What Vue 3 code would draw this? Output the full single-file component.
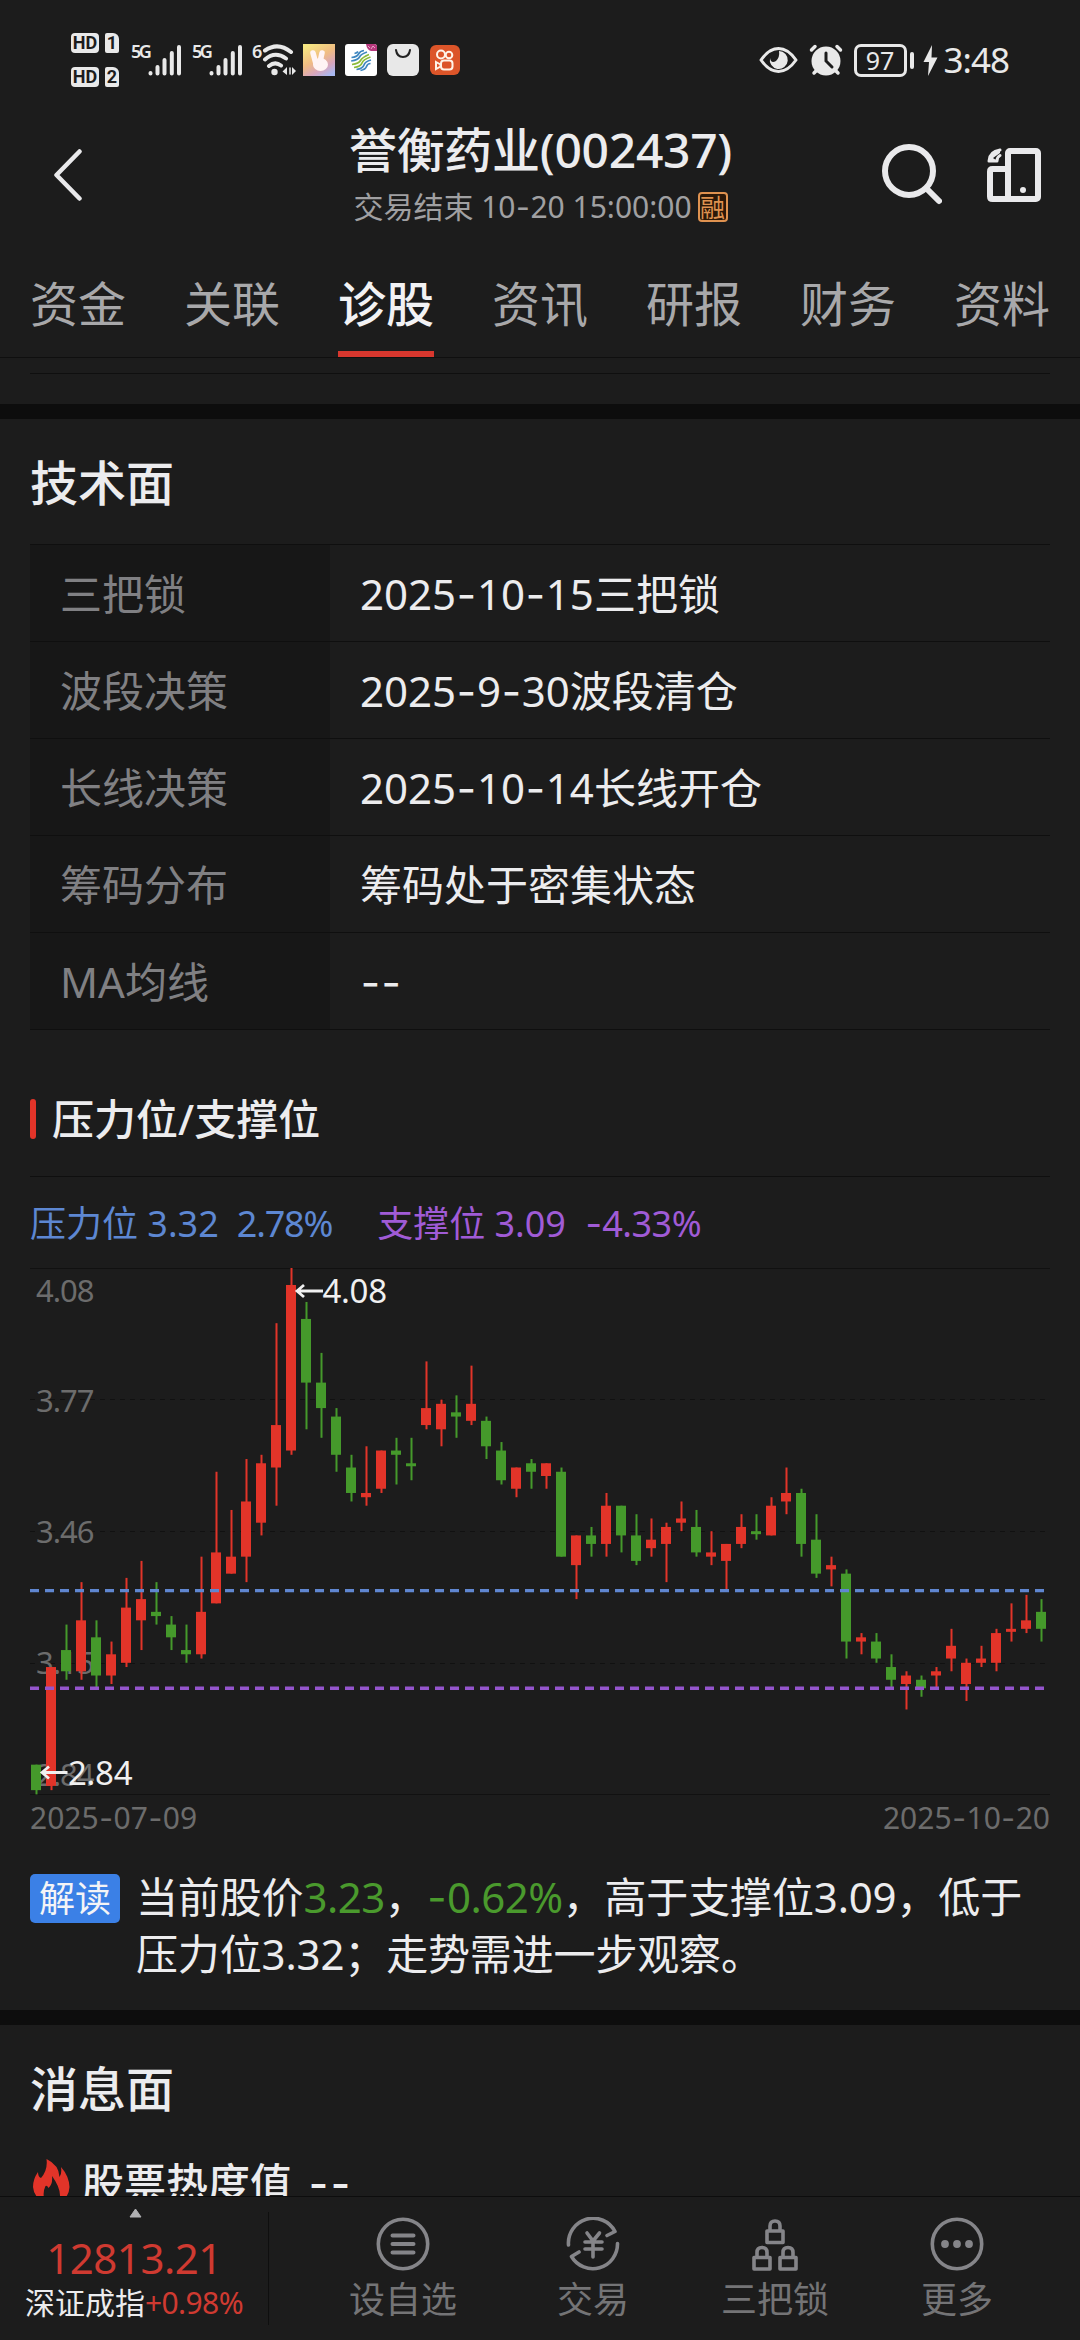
<template>
  <div class="screen">

    <!-- System status bar -->
    <div class="status">
      <div class="sims">
        <div v-for="n in 2" :key="n" class="sim">
          <span class="hd">HD</span>
          <span class="sim-no">{{ n }}</span>
        </div>
      </div>

      <div v-for="n in 2" :key="n" class="signal">
        <span class="net">5G</span>
        <svg width="34" height="34" viewBox="0 0 34 34" stroke="#e9e9e9" stroke-width="4" stroke-linecap="round">
          <path d="M2.5 30V30.5M9.5 24V30.5M16.5 17V30.5M23.8 10V30.5M31 4V30.5" />
        </svg>
      </div>

      <div class="wifi">
        <span class="net">6</span>
        <svg width="36" height="34" viewBox="0 0 36 34" fill="none" stroke="#e9e9e9" stroke-width="4" stroke-linecap="round">
          <path d="M4 7.5Q17 -1.5 30 9M4 16.5Q14 7.500 25 15.500M8 23Q14 18 20 22.500" />
          <circle cx="13.500" cy="29" r="3.200" fill="#e9e9e9" stroke="none" />
          <path d="M26 24V32L21.500 28.500ZM31 32V24L35 28Z" fill="#e9e9e9" stroke="none" />
          <path d="M29 25V31" stroke-width="1.500" />
        </svg>
      </div>

      <svg class="app" width="32" height="32" viewBox="0 0 32 32">
        <defs>
          <linearGradient id="hand-bg" x1="0.2" y1="0" x2="0.8" y2="1">
            <stop offset="0" stop-color="#f6e781" />
            <stop offset="0.45" stop-color="#f0bc83" />
            <stop offset="0.75" stop-color="#d8a6bd" />
            <stop offset="1" stop-color="#a9b9f2" />
          </linearGradient>
        </defs>
        <rect width="32" height="32" fill="url(#hand-bg)" />
        <path d="M10 9L13 20M19 9L17 18" stroke="#fff4f4" stroke-width="5.500" stroke-linecap="round" />
        <ellipse cx="17.500" cy="20.500" rx="7.500" ry="6.500" fill="#fff4f4" />
      </svg>

      <svg class="app" width="32" height="32" viewBox="0 0 32 32" fill="none">
        <rect width="32" height="32" rx="3" fill="#fff" />
        <path d="M21 0H29Q32 0 32 3V7H26Q22 6 21 0Z" fill="#b7377c" />
        <path d="M23 2L25 4M26 5L28 2L30 4" stroke="#e9a5c8" stroke-width="1" />
        <g stroke-width="1.700">
          <path d="M9.500 9.500Q12 9 13 7.500M6.500 13.500Q12 13 13.500 10T19 6.500M6.200 17Q13 16 14.500 13T22 8" stroke="#3e86bf" />
          <path d="M7 20.500Q14 19.500 15.500 16.500T24 10.500M9 23.500Q16 22.500 17 19T25.500 13" stroke="#8cbb3a" />
          <path d="M11.500 25.500Q18 24.500 19 21T26 16M15.500 26.500Q20.500 25.500 21.500 22.500T25.500 19.500" stroke="#3e86bf" />
        </g>
      </svg>

      <svg class="app" width="32" height="32" viewBox="0 0 32 32" fill="none">
        <rect width="32" height="32" rx="6" fill="#e8e8e8" />
        <path d="M9 6Q10 13 16 13T23 6" stroke="#222" stroke-width="2" stroke-linecap="round" />
      </svg>

      <svg class="app" width="32" height="32" viewBox="0 0 32 32" fill="none" stroke="#fff4e8" stroke-width="2">
        <rect x="1" y="1" width="30" height="30" rx="6" fill="#dc5529" stroke="none" />
        <circle cx="12" cy="10.500" r="4" />
        <circle cx="20" cy="11" r="3.300" />
        <rect x="12" y="16.500" width="11.500" height="9" rx="3" />
        <path d="M7 18L11.500 20.500V22.500L7 25Z" />
      </svg>

      <div class="status-right">
        <svg width="39" height="28" viewBox="0 0 39 28" fill="none">
          <path d="M2 14Q10 2.500 19.500 2.500T37 14Q29 25.500 19.500 25.500T2 14Z" stroke="#e9e9e9" stroke-width="3" stroke-linejoin="round" />
          <path d="M20 5A9 9 0 1 1 11 12Q12 18 17 15Q21 11 20 5Z" fill="#e9e9e9" />
        </svg>
        <svg class="alarm" width="34" height="32" viewBox="0 0 34 32" fill="none" stroke="#e9e9e9" stroke-linecap="round">
          <circle cx="17" cy="17" r="14.500" fill="#e9e9e9" stroke="none" />
          <path d="M2.500 6L6 2.500M31.500 6L28 2.500M5 29L8 26M29 29L26 26" stroke-width="3.500" />
          <path d="M17 9V17L23 23" stroke="#1c1c1c" stroke-width="3" />
        </svg>
        <span class="battery">97</span>
        <span class="nub" />
        <svg class="bolt" width="15" height="31" viewBox="0 0 15 31">
          <path d="M9 0L0.500 17H6L5 31L14.500 12.500H8.500Z" fill="#e9e9e9" />
        </svg>
        <span class="clock">3:48</span>
      </div>
    </div>

    <!-- Title bar -->
    <header class="header">
      <svg class="back" width="28" height="52" viewBox="0 0 28 52" fill="none">
        <path d="M25.500 2.500L2.500 26L25.500 49.500" stroke="#e9e9eb" stroke-width="4.500" stroke-linecap="round" stroke-linejoin="round" />
      </svg>
      <div class="heading">
        <h1>誉衡药业(002437)</h1>
        <div class="sub">
          <DashText text="交易结束 10-20 15:00:00" />
          <span class="margin-tag">融</span>
        </div>
      </div>
      <svg class="search" width="60" height="61" viewBox="0 0 60 61" fill="none" stroke="#e9e9eb">
        <circle cx="27" cy="27" r="24" stroke-width="6" />
        <path d="M45 45L57 57" stroke-width="6" stroke-linecap="round" />
      </svg>
      <svg width="54" height="54" viewBox="0 0 54 54" fill="none" stroke="#e9e9eb" stroke-width="6">
        <rect x="21" y="3" width="30" height="48" rx="2" />
        <path d="M21 21H5.500Q3 21 3 23.500V48.500Q3 51 5.500 51H24" />
        <path d="M13 2Q2.500 3.500 2 13H10Q10 9 13 7.500" stroke-width="3" stroke-linejoin="round" stroke-linecap="round" />
        <path d="M13 2Q2.500 3.500 2 13H10L6 10L13 5Z" fill="#e9e9eb" stroke="none" />
        <circle cx="36" cy="42" r="3" fill="#e9e9eb" stroke="none" />
      </svg>
    </header>

    <nav class="tabs">
      <span v-for="t in tabs" :key="t" class="tab" :class="{ active: t === '诊股' }">{{ t }}</span>
    </nav>

    <!-- Scrolling content -->
    <main class="content">
      <div class="prev-end" />

      <section class="technical">
        <h2>技术面</h2>
        <div class="table">
          <div v-for="r in rows" :key="r.label" class="row">
            <span class="label">{{ r.label }}</span>
            <DashText class="value" :text="r.value" />
          </div>
        </div>

        <h3 class="levels-title">压力位/支撑位</h3>

        <div class="legend">
          <span class="resist">压力位 3.32</span>
          <span class="resist pct">2.78%</span>
          <span class="support">支撑位 3.09</span>
          <DashText class="support pct" text="-4.33%" />
        </div>

        <svg class="chart" width="1020" height="527" viewBox="0 0 1020 527">
          <path class="edge" d="M0 0.500H1020M0 526.500H1020" />
          <path class="grid" d="M0 131.500H1020M0 263.500H1020M0 395.500H1020" />
          <text v-for="(p, i) in axis" :key="p" class="axis" x="6" :y="axisY[i]">{{ p }}</text>

          <g v-for="(c, i) in candles" :key="i" :class="c[0] ? 'up' : 'down'">
            <rect :x="i * 15 + 5.500" :y="y(c[1])" width="2" :height="y(c[4]) - y(c[1])" />
            <rect :x="i * 15 + 1" :y="y(c[2])" width="10" :height="Math.max(3, y(c[3]) - y(c[2]))" />
          </g>

          <path class="level resist-line" :d="`M0 ${y(332)}H1015`" />
          <path class="level support-line" :d="`M0 ${y(309)}H1015`" />

          <path class="arrow" d="M293 23H267M274 17L267 23L274 29M37.500 504.500H12M19 498.500L12 504.500L19 510.500" />
          <text class="mark" x="292.500" y="35">4.08</text>
          <text class="mark" x="38" y="516.500">2.84</text>
        </svg>

        <div class="dates">
          <DashText text="2025-07-09" />
          <DashText text="2025-10-20" />
        </div>

        <div class="note">
          <span class="note-tag">解读</span>
          <p>
            当前股价<span class="fall">3.23</span>，<DashText class="fall" text="-0.62%" />，高于支撑位3.09，低于压力位3.32；走势需进一步观察。
          </p>
        </div>
      </section>

      <section class="news">
        <h2>消息面</h2>
        <div class="heat">
          <svg width="37" height="44" viewBox="0 0 37 44">
            <path d="M13.500 0Q26 6 26.500 18Q29 15 28 8Q36 17 36.500 28Q36 39 26 43Q30 32 19 17Q20 25 15.500 29Q14 26 12.500 27Q9 34 12 43Q1 39 0 28Q0 20 5 13Q5 18 8 19Q15 11 13.500 0Z" fill="#e23429" />
          </svg>
          <h3>股票热度值<DashText class="heat-value" text="--" /></h3>
        </div>
      </section>
    </main>

    <!-- Bottom bar -->
    <footer class="bottom">
      <div class="index">
        <svg width="13" height="10" viewBox="0 0 13 10">
          <path d="M6.500 1L12 9H1Z" fill="#b1b1b3" stroke="#b1b1b3" stroke-linejoin="round" />
        </svg>
        <span class="points">12813.21</span>
        <span class="index-name">深证成指<em>+0.98%</em></span>
      </div>

      <div class="actions">
        <div class="action">
          <svg width="54" height="54" viewBox="0 0 54 54">
            <circle cx="27" cy="27" r="24.700" />
            <path d="M16.500 18.500H37.500M16.500 27H37.500M16.500 35.500H37.500" stroke-width="4" />
          </svg>
          设自选
        </div>
        <div class="action">
          <svg width="54" height="54" viewBox="0 0 54 54">
            <path d="M2.500 28A24.700 24.700 0 0 1 49 14.500L41 18.500M51.500 26.500A24.700 24.700 0 0 1 5.500 39.500L13 35" />
            <path d="M21 16L27 24L33.500 16M19 25H36M19 32H36M27 24V40" />
          </svg>
          交易
        </div>
        <div class="action">
          <svg width="54" height="54" viewBox="0 0 54 54">
            <path d="M19 14H35V25.500H19ZM6 40.500H22V52H6ZM32 40.500H48V52H32Z" />
            <path d="M22 13V9Q22 4 27 4T32 9V13M9 39V35.500Q9 30.500 14 30.500T19 35.500V39M35 39V35.500Q35 30.500 40 30.500T45 35.500V39" />
          </svg>
          三把锁
        </div>
        <div class="action">
          <svg width="54" height="54" viewBox="0 0 54 54">
            <circle cx="27" cy="27" r="24.700" />
            <g class="dots">
              <circle cx="15" cy="27" r="3.900" />
              <circle cx="27" cy="27" r="3.900" />
              <circle cx="39" cy="27" r="3.900" />
            </g>
          </svg>
          更多
        </div>
      </div>
    </footer>

  </div>
</template>

<script setup>
import { h } from 'vue'

// hyphens are set in a wider face than the digits around them
const DashText = ({ text }) =>
  h('span', text.split(/(-)/).map(p => (p === '-' ? h('span', { class: 'dash' }, p) : p)))
DashText.props = ['text']

const tabs = ['资金', '关联', '诊股', '资讯', '研报', '财务', '资料']

const rows = [
  { label: '三把锁',   value: '2025-10-15三把锁' },
  { label: '波段决策', value: '2025-9-30波段清仓' },
  { label: '长线决策', value: '2025-10-14长线开仓' },
  { label: '筹码分布', value: '筹码处于密集状态' },
  { label: 'MA均线',   value: '--' },
]

const axis = ['4.08', '3.77', '3.46', '3.15', '2.84']
const axisY = [34, 143.5, 275, 406, 518]

// [rising, high, body top, body bottom, low], prices in cents
const candles = [
  [0, 291, 291, 285, 284], [1, 314, 314, 286, 285], [0, 324, 318, 313, 311], [1, 334, 325, 313, 311],
  [0, 325, 321, 312, 309], [1, 320, 317, 312, 310], [1, 335, 328, 315, 314], [1, 339, 330, 325, 318],
  [0, 334, 327, 326, 324], [0, 326, 324, 321, 318], [0, 324, 318, 317, 315], [1, 340, 327, 317, 316],
  [1, 360, 341, 329, 329], [1, 351, 340, 336, 336], [1, 363, 353, 340, 334], [1, 364, 362, 348, 345],
  [1, 395, 371, 361, 352], [1, 408, 404, 365, 364], [0, 400, 396, 381, 370], [0, 388, 381, 375, 368],
  [0, 375, 373, 364, 360], [0, 364, 361, 355, 353], [1, 366, 355, 354, 352], [1, 365, 365, 356, 355],
  [0, 368, 365, 364, 357], [0, 368, 362, 362, 358], [1, 386, 375, 371, 370], [1, 377, 376, 370, 366],
  [0, 378, 374, 373, 368], [1, 385, 376, 372, 371], [0, 373, 372, 366, 363], [0, 367, 365, 358, 357],
  [1, 361, 361, 356, 354], [0, 363, 362, 360, 356], [1, 362, 362, 359, 356], [0, 361, 360, 340, 340],
  [1, 345, 345, 338, 330], [0, 347, 345, 343, 340], [1, 355, 352, 343, 340], [0, 352, 352, 345, 341],
  [0, 350, 345, 339, 338], [1, 349, 344, 342, 340], [1, 348, 347, 343, 334], [1, 353, 349, 348, 346],
  [0, 351, 347, 341, 340], [1, 346, 341, 340, 338], [1, 343, 343, 339, 332], [1, 350, 347, 343, 342],
  [0, 350, 346, 346, 344], [1, 354, 352, 345, 345], [1, 361, 355, 353, 350], [0, 356, 355, 343, 340],
  [0, 350, 344, 336, 335], [1, 340, 338, 337, 333], [0, 337, 336, 320, 316], [1, 322, 321, 320, 317],
  [0, 322, 320, 316, 315], [0, 317, 314, 311, 309], [1, 313, 312, 310, 304], [0, 312, 311, 309, 307],
  [1, 314, 313, 312, 309], [1, 323, 319, 316, 313], [1, 316, 315, 310, 306], [1, 319, 316, 315, 314],
  [1, 323, 322, 315, 313], [1, 329, 323, 323, 320], [1, 331, 325, 323, 322], [0, 330, 327, 323, 320],
]

const y = cents => (408 - cents) * 4.245
</script>

<style>
  body {
    background: #1c1c1c;
  }

  .dash {
    padding: 0 0.018em;
    font-family: Inter, sans-serif;
  }
</style>

<style scoped>
  .screen {
    width: 1080px;
    height: 2340px;
    overflow: hidden;
    display: flex;
    flex-direction: column;
    background: #1c1c1c;
    color: #ececee;
    font-family: 'Noto Sans', 'Noto Sans CJK SC', sans-serif;
  }

  svg {
    display: block;
    flex: none;
  }

  h1, h2, h3, p {
    margin: 0;
    font-weight: 500;
  }

  /* Status bar */
  .status {
    height: 120px;
    box-sizing: border-box;
    padding: 0 71px;
    display: flex;
    align-items: center;
    color: #e9e9e9;
  }

  .sims {
    display: flex;
    flex-direction: column;
    gap: 14px;
    margin-right: 12px;
  }

  .sim {
    display: flex;
    gap: 6px;
  }

  .hd, .sim-no {
    height: 20px;
    line-height: 20px;
    background: #e9e9e9;
    color: #1c1c1c;
    font-family: Roboto, sans-serif;
    font-size: 18px;
    font-weight: 700;
    text-align: center;
    border-radius: 4px;
  }

  .hd {
    width: 28px;
  }

  .sim-no {
    width: 14px;
    border-radius: 2px 6px 2px 2px;
  }

  .signal, .wifi {
    display: flex;
    margin-right: 10px;
  }

  .net {
    width: 17px;
    font-family: 'Noto Sans', sans-serif;
    font-size: 18px;
    font-weight: 600;
    line-height: 17px;
    letter-spacing: -2.500px;
  }

  .wifi {
    margin: 0 6px 0 -1px;
  }

  .wifi .net {
    width: 9px;
  }

  .app {
    margin-right: 10px;
  }

  .status-right {
    display: flex;
    align-items: center;
    margin-left: auto;
  }

  .alarm {
    margin: 0 11px;
  }

  .battery {
    width: 53px;
    height: 33px;
    box-sizing: border-box;
    border: 3px solid #e9e9e9;
    border-radius: 7px;
    font-size: 25px;
    line-height: 27px;
    text-align: center;
  }

  .nub {
    width: 4px;
    height: 17px;
    margin: 0 9px 0 3px;
    border-radius: 2px;
    background: #e9e9e9;
  }

  .clock {
    margin-left: 6px;
    font-size: 35px;
    line-height: 40px;
    letter-spacing: -1px;
  }

  /* Title bar */
  .header {
    height: 137px;
    box-sizing: border-box;
    padding: 0 39px 28px 54px;
    display: flex;
    align-items: center;
  }

  .heading {
    width: 389px;
    margin: 3px 147px 0 264px;
    display: flex;
    flex-direction: column;
    align-items: center;
    white-space: nowrap;
  }

  h1 {
    font-size: 48px;
    line-height: 62px;
    letter-spacing: -0.300px;
  }

  .sub {
    display: flex;
    align-items: center;
    gap: 6px;
    height: 52px;
    color: #a0a0a2;
    font-size: 30px;
    line-height: 40px;
  }

  .margin-tag {
    width: 30px;
    height: 30px;
    box-sizing: border-box;
    border: 2px solid #df9250;
    border-radius: 4px;
    background: #2b1808;
    color: #df9250;
    font-family: 'Noto Sans CJK SC', sans-serif;
    font-size: 25px;
    line-height: 25px;
    text-align: center;
  }

  .search {
    margin-right: 45px;
  }

  /* Tabs */
  .tabs {
    height: 101px;
    box-sizing: border-box;
    padding: 0 30px;
    display: flex;
    justify-content: space-between;
    border-bottom: 1px solid #0f0f0f;
  }

  .tab {
    box-sizing: border-box;
    height: 100px;
    color: #a8a8aa;
    font-size: 48px;
    line-height: 94px;
  }

  .tab.active {
    color: #f2f2f4;
    font-weight: 500;
    background: linear-gradient(#d8372e, #d8372e) bottom / 100% 6px no-repeat;
  }

  .content {
    flex: 1;
    min-height: 0;
    overflow: hidden;
  }

  .prev-end {
    height: 30px;
    margin: 15px 30px 0;
    border-top: 1px solid #0f0f0f;
  }

  /* Sections */
  section {
    border-top: 15px solid #0d0d0d;
    padding: 0 30px;
  }

  .technical {
    height: 1591px;
  }

  h2 {
    height: 125px;
    font-size: 48px;
    line-height: 128px;
  }

  .table {
    border-top: 1px solid #0f0f0f;
  }

  .row {
    display: flex;
    height: 97px;
    box-sizing: border-box;
    border-bottom: 1px solid #0f0f0f;
    font-size: 42px;
    line-height: 98px;
  }

  .label {
    width: 300px;
    height: 96px;
    box-sizing: border-box;
    padding-left: 30px;
    background: #171717;
    color: #808083;
  }

  .value {
    padding-left: 30px;
  }

  .levels-title {
    display: flex;
    align-items: center;
    height: 58px;
    padding: 60px 0 28px;
    font-size: 42px;
    line-height: 58px;
    border-bottom: 1px solid #0f0f0f;
  }

  .levels-title::before {
    content: '';
    width: 6px;
    height: 40px;
    margin-right: 16px;
    border-radius: 3px;
    background: #e23429;
  }

  .legend {
    display: flex;
    height: 91px;
    font-size: 36px;
    line-height: 93px;
    white-space: pre;
  }

  .resist {
    color: #5d87d2;
  }

  .support {
    color: #a05bd6;
  }

  .resist.pct {
    margin: 0 45px 0 18px;
    letter-spacing: -1.200px;
  }

  .support.pct {
    margin-left: 19px;
    letter-spacing: -0.500px;
  }

  /* Candlestick chart */
  .chart {
    overflow: visible;
  }

  .edge {
    stroke: #111;
  }

  .grid {
    stroke: #111;
    stroke-dasharray: 5 5;
  }

  .axis {
    fill: #6c6c6c;
    font-size: 31px;
    letter-spacing: -1px;
  }

  .up {
    fill: #e23429;
  }

  .down {
    fill: #45992b;
  }

  .level {
    stroke-width: 3.400;
    stroke-dasharray: 9 6;
  }

  .resist-line {
    stroke: #5f86d0;
  }

  .support-line {
    stroke: #9455cc;
  }

  .arrow {
    fill: none;
    stroke: #f0f0f0;
    stroke-width: 2.800;
  }

  .mark {
    fill: #f0f0f0;
    font-size: 33px;
    letter-spacing: -0.300px;
  }

  .dates {
    display: flex;
    justify-content: space-between;
    height: 45px;
    color: #6c6c6c;
    font-size: 30px;
    line-height: 45px;
  }

  .note {
    display: flex;
    gap: 16px;
    padding-top: 34px;
    align-items: flex-start;
  }

  .note-tag {
    flex: none;
    width: 90px;
    height: 49px;
    border-radius: 5px;
    background: #3b80e6;
    color: #f4f4f6;
    font-size: 36px;
    line-height: 49px;
    text-align: center;
  }

  .note p {
    font-size: 42px;
    font-weight: 400;
    line-height: 56px;
    margin-top: -5px;
    letter-spacing: -0.150px;
  }

  .fall {
    color: #4a9a2d;
    letter-spacing: -0.500px;
  }

  .heat {
    display: flex;
    gap: 12px;
    padding: 9px 0 0 3px;
  }

  .heat h3 {
    font-size: 42px;
    line-height: 48px;
  }

  .heat-value {
    margin-left: 16px;
    letter-spacing: 1px;
  }

  /* Bottom bar */
  .bottom {
    flex: none;
    display: flex;
    height: 144px;
    box-sizing: border-box;
    border-top: 1px solid #0d0d0d;
  }

  .index {
    width: 269px;
    height: 113px;
    margin-top: 15px;
    border-right: 1px solid #0f0f0f;
    box-sizing: border-box;
    display: flex;
    flex-direction: column;
    align-items: center;
    white-space: nowrap;
  }

  .index svg {
    margin-top: -4px;
    margin-left: 2px;
  }

  .points {
    margin-top: 12px;
    color: #cf3a31;
    font-size: 42px;
    line-height: 56px;
    letter-spacing: -0.500px;
  }

  .index-name {
    margin-top: 1px;
    font-size: 30px;
    line-height: 32px;
  }

  .index-name em {
    color: #cf3a31;
    font-style: normal;
    letter-spacing: -0.600px;
  }

  .actions {
    display: flex;
    gap: 100px;
    padding: 20px 0 0 80px;
  }

  .action {
    display: flex;
    flex-direction: column;
    align-items: center;
    gap: 5px;
    color: #747476;
    font-size: 36px;
    line-height: 48px;
  }

  .action:nth-child(n + 3) {
    margin-left: -8px;
  }

  .action svg {
    fill: none;
    stroke: #858589;
    stroke-width: 3.600;
    stroke-linecap: round;
    stroke-linejoin: round;
  }

  .action .dots {
    fill: #858589;
    stroke: none;
  }
</style>
